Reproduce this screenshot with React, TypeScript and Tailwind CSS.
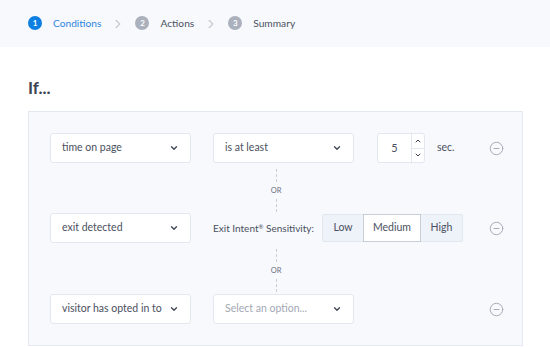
import { ChevronDown, ChevronRight, ChevronUp, CircleMinus } from "lucide-react";

const font = { fontFamily: "Lato, 'Open Sans', sans-serif" };

function Step({ n, label, active }: { n: number; label: string; active?: boolean }) {
  return (
    <div className="flex items-center gap-[11px]">
      <span
        className={`flex h-[14px] w-[14px] items-center justify-center rounded-full text-[8px] font-bold text-white ${
          active ? "bg-[#0d7fe0]" : "bg-[#aab0bc]"
        }`}
      >
        {n}
      </span>
      <span className={`text-[10.2px] ${active ? "text-[#2d86e0]" : "text-[#4b5261]"}`}>{label}</span>
    </div>
  );
}

function Select({ value, placeholder }: { value?: string; placeholder?: string }) {
  return (
    <div className="flex h-[30px] w-[141px] shrink-0 items-center justify-between rounded-[3px] border border-[#e3e7ef] bg-white pl-[11px] pr-[11px]">
      <span className={`whitespace-nowrap text-[10.5px] ${value ? "text-[#4a5060]" : "text-[#a3a8b3]"}`}>
        {value ?? placeholder}
      </span>
      <ChevronDown className="h-[10px] w-[10px] text-[#3d4452]" strokeWidth={3} />
    </div>
  );
}

function Remove() {
  return <CircleMinus className="ml-auto -mr-[3px] h-[15px] w-[15px] shrink-0 text-[#a6adba]" strokeWidth={1.6} />;
}

function Or({ h }: { h: number }) {
  return (
    <div className="flex flex-col items-center" style={{ marginLeft: 226, width: 0, height: h }}>
      <div className="mt-[6px] h-[13px] border-l border-dashed border-[#c9ced8]" />
      <span className="my-[3px] text-[7.5px] text-[#6a7080]">OR</span>
      <div className="h-[13px] border-l border-dashed border-[#c9ced8]" />
    </div>
  );
}

export default function App() {
  return (
    <div className="h-[347px] w-[550px] overflow-hidden bg-white" style={font}>
      <div className="flex h-[47px] items-center gap-[10px] bg-[#f8f9fd] pl-[28px]">
        <Step n={1} label="Conditions" active />
        <ChevronRight className="h-[14px] w-[14px] text-[#c9cdd6]" strokeWidth={2.5} />
        <Step n={2} label="Actions" />
        <ChevronRight className="h-[14px] w-[14px] text-[#c9cdd6]" strokeWidth={2.5} />
        <Step n={3} label="Summary" />
      </div>

      <div className="px-[28px] pt-[29px]">
        <h2 className="text-[17px] font-bold leading-[24px] text-[#3d4452]">If...</h2>

        <div className="mt-[11px] w-[495px] border border-[#e4e8f0] bg-[#f8f9fd] px-[21px] pt-[21px] pb-[21px]">
          <div className="flex items-center">
            <Select value="time on page" />
            <div className="ml-[22px]">
              <Select value="is at least" />
            </div>
            <div className="ml-[23px] flex h-[30px] w-[48px] shrink-0 items-stretch rounded-[3px] border border-[#e3e7ef] bg-white">
              <span className="flex flex-1 items-center justify-center text-[11px] text-[#4a5060]">5</span>
              <div className="flex w-[13px] flex-col border-l border-[#e3e7ef]">
                <div className="flex flex-1 items-center justify-center border-b border-[#e3e7ef]">
                  <ChevronUp className="h-[8px] w-[8px] text-[#3d4452]" strokeWidth={3} />
                </div>
                <div className="flex flex-1 items-center justify-center">
                  <ChevronDown className="h-[8px] w-[8px] text-[#3d4452]" strokeWidth={3} />
                </div>
              </div>
            </div>
            <span className="ml-[12px] text-[10.5px] text-[#4a5060]">sec.</span>
            <Remove />
          </div>

          <Or h={50} />

          <div className="flex items-center">
            <Select value="exit detected" />
            <span className="ml-[22px] whitespace-nowrap text-[10px] text-[#4a5060]">
              Exit Intent<sup className="text-[6px]">®</sup> Sensitivity:
            </span>
            <div className="ml-auto flex h-[28px] shrink-0 rounded-[2px] border border-[#e3e7ef] bg-[#eef2f9] text-[10.5px] text-[#4a5060]">
              <span className="flex w-[40px] items-center justify-center">Low</span>
              <span className="-my-px flex w-[58px] items-center justify-center border border-[#c9cfda] bg-white">Medium</span>
              <span className="flex w-[41px] items-center justify-center">High</span>
            </div>
            <div className="ml-[26px] -mr-[3px] shrink-0">
              <CircleMinus className="h-[15px] w-[15px] text-[#a6adba]" strokeWidth={1.6} />
            </div>
          </div>

          <Or h={51} />

          <div className="flex items-center">
            <Select value="visitor has opted in to" />
            <div className="ml-[22px]">
              <Select placeholder="Select an option..." />
            </div>
            <Remove />
          </div>
        </div>
      </div>
    </div>
  );
}
